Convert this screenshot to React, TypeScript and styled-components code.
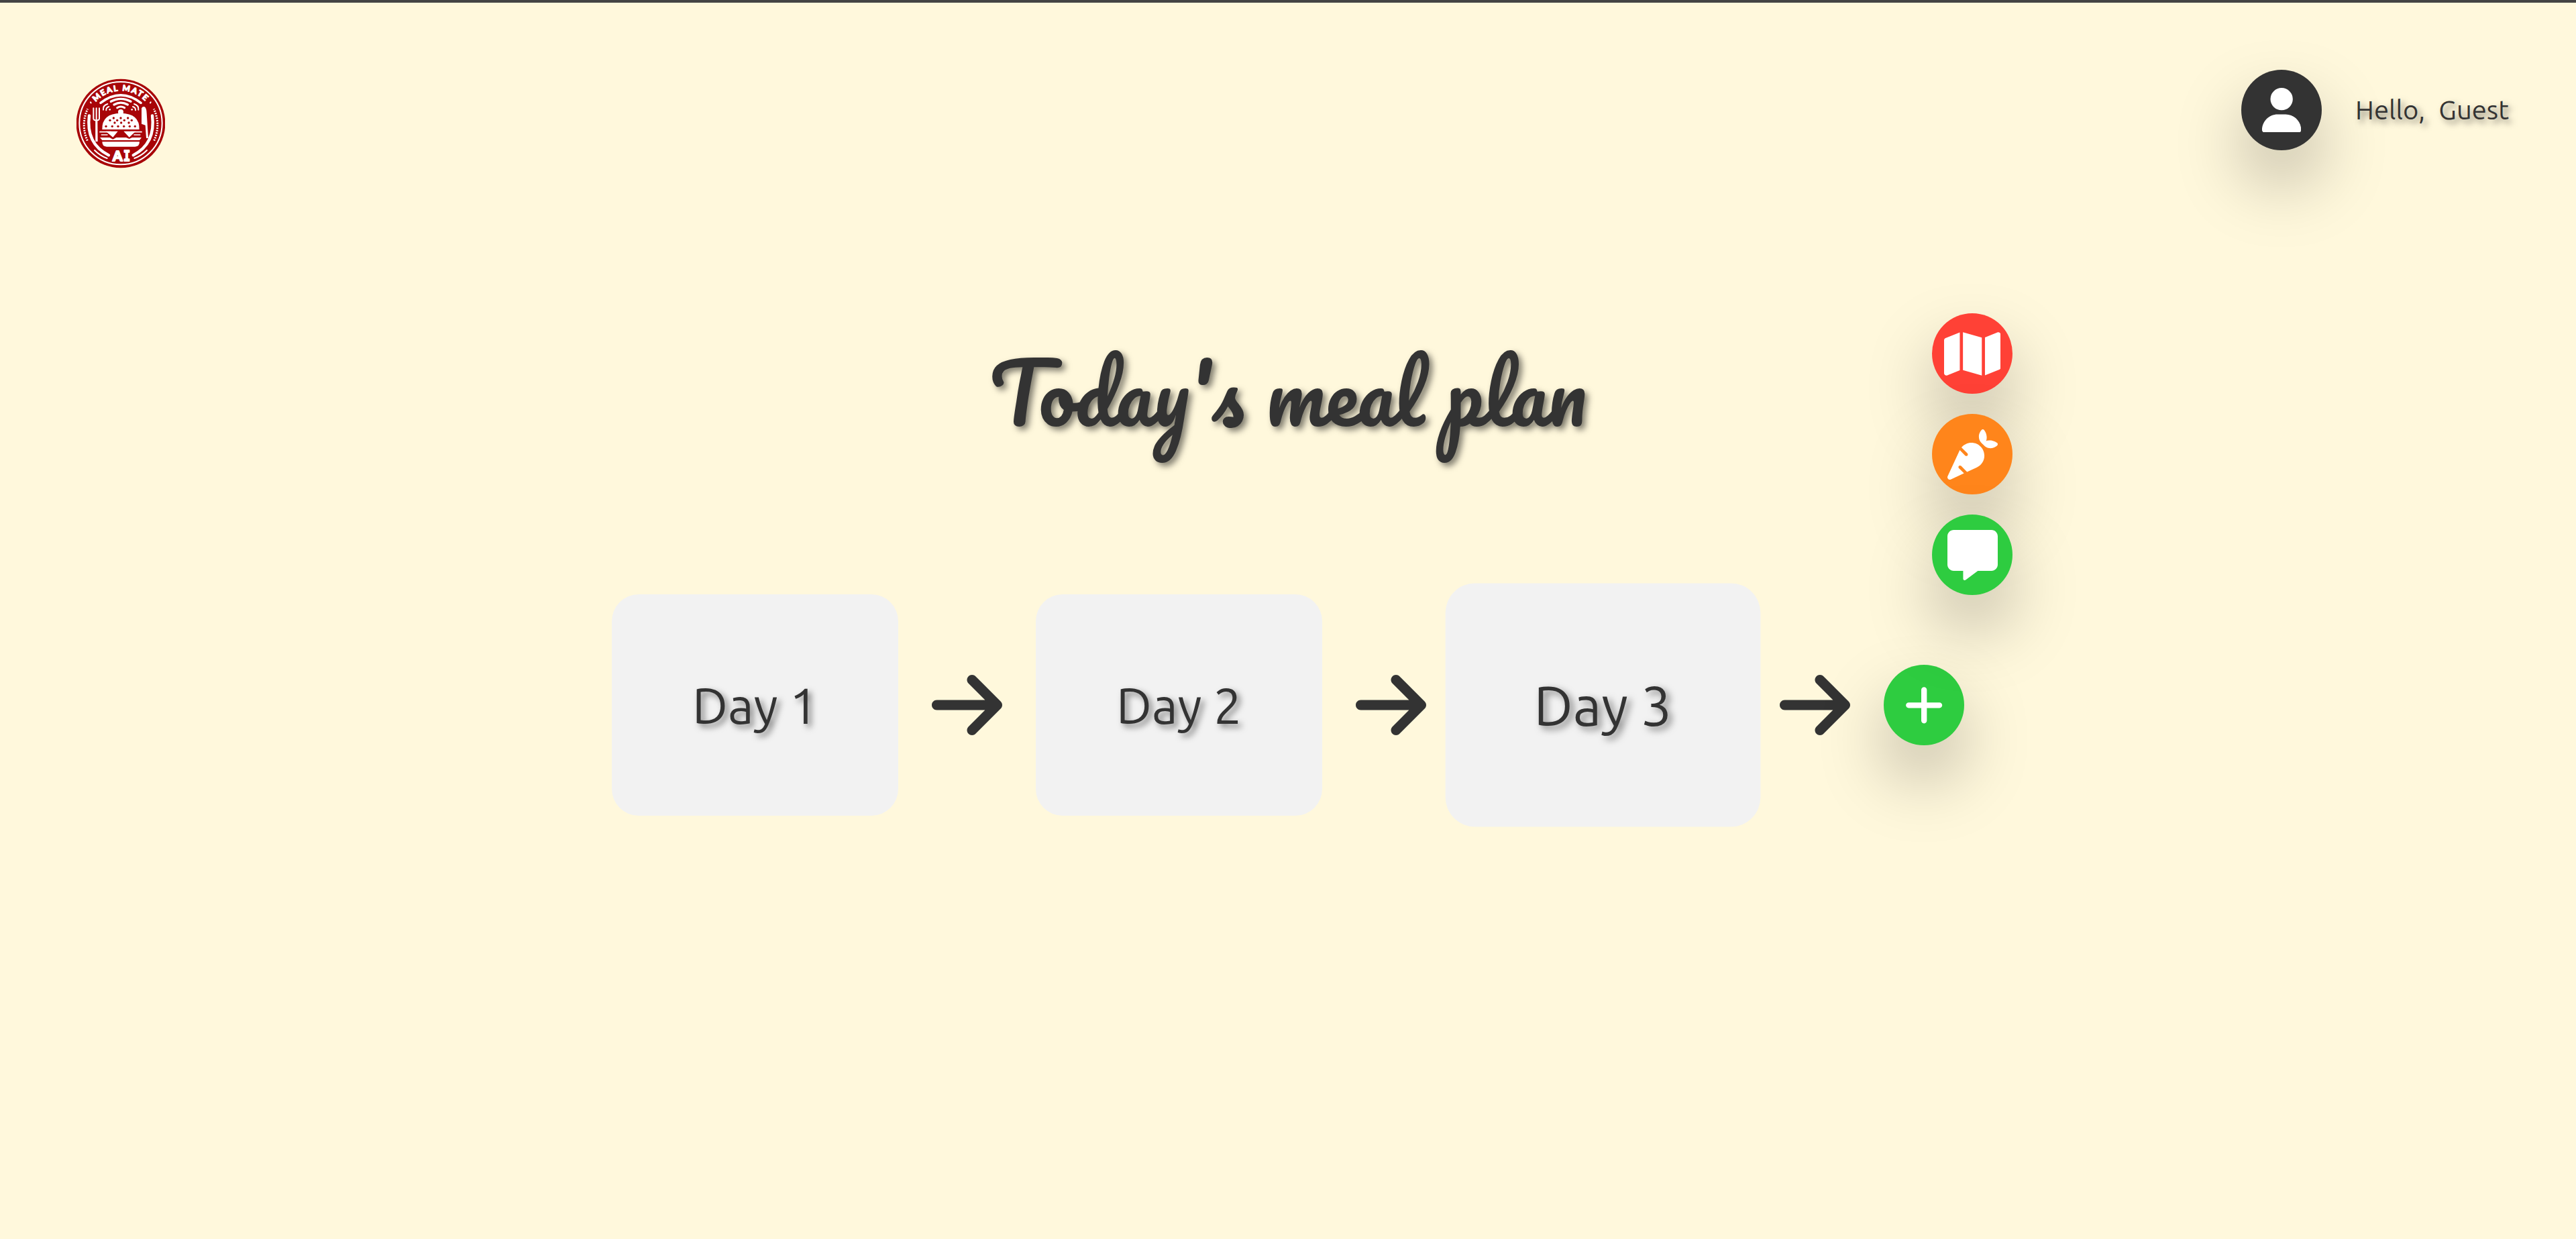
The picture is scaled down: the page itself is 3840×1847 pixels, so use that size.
import React from "react";
import styled, { createGlobalStyle } from "styled-components";
import { FaArrowRight, FaCarrot, FaMap, FaMessage, FaPlus, FaUser } from "react-icons/fa6";

const GlobalStyle = createGlobalStyle`
  * { box-sizing: border-box; }
  body {
    margin: 0;
    background: #fff8dc;
    color: #333;
    font-family: Ubuntu, "Noto Sans", "Open Sans", sans-serif;
  }
`;

const Page = styled.div`
  height: 1847px;
  overflow: hidden;
  border-top: 4px solid #444;
`;

const Header = styled.header`
  display: flex;
  justify-content: space-between;
  align-items: flex-start;
  padding: 100px 100px 0 114px;
  height: 460px;
`;

const Logo = styled.svg`
  display: block;
  width: 132px;
  height: 134px;
  margin-top: 13px;
`;

const Account = styled.div`
  display: flex;
  align-items: center;
  width: 399px;
`;

const Greeting = styled.span`
  margin-left: 50px;
  font-size: 40px;
  line-height: 60px;
  word-spacing: 1px;
  white-space: pre;
  text-shadow: 5px 5px 10px rgba(0, 0, 0, 0.5);
`;

const RoundButton = styled.button<{ $color: string; $icon: number }>`
  display: flex;
  flex: none;
  align-items: center;
  justify-content: center;
  width: 120px;
  height: 120px;
  padding: 0;
  border: 0;
  border-radius: 50%;
  background: ${(p) => p.$color};
  color: #fff;
  font-size: ${(p) => p.$icon}px;
  box-shadow: 0 50px 100px rgba(0, 0, 0, 0.25);
`;

const MapIcon = styled(FaMap)`
  width: 84.4px;
  height: 75px;
`;

const NarrowIcon = styled.span`
  display: flex;
  svg { width: 0.875em; height: 1em; }
`;

const Title = styled.h1`
  margin: 0;
  height: 422px;
  padding-top: 40px;
  font-family: Pacifico, Lato, cursive;
  font-size: 120px;
  font-weight: 400;
  line-height: 160px;
  text-align: center;
  text-shadow: 5px 5px 10px rgba(0, 0, 0, 0.5);
`;

const Plan = styled.main`
  display: flex;
  align-items: center;
  justify-content: center;
  gap: 50px;
  height: 330px;
`;

const DayCard = styled.section<{ $active?: boolean }>`
  display: flex;
  align-items: center;
  justify-content: center;
  width: 427px;
  height: 330px;
  border-radius: 40px;
  background: #f2f2f2;
  font-size: 75px;
  text-shadow: 5px 5px 10px rgba(0, 0, 0, 0.5);
  transform: ${(p) => (p.$active ? "scale(1.1)" : "none")};
`;

const Arrow = styled(FaArrowRight)`
  flex: none;
  width: 105px;
  height: 120px;
`;

const AddMeal = styled.div`
  position: relative;
`;

const Actions = styled.div`
  position: absolute;
  left: 72px;
  bottom: calc(100% + 104px);
  display: flex;
  flex-direction: column;
  gap: 30px;
`;

const dots = [
  [238, 258], [270, 258], [302, 258], [222, 268], [254, 268], [286, 268], [319, 268],
  [243, 279], [272, 279], [306, 279], [204, 295], [232, 295], [258, 295], [284, 295], [310, 295], [334, 295],
];

function MealMateLogo() {
  return (
    <Logo viewBox="72 81 396 402" preserveAspectRatio="none">
      <circle cx="270" cy="282" r="199" fill="#a80508" />
      <g fill="none" stroke="#fff" strokeLinecap="round">
        <circle cx="270" cy="281" r="185" strokeWidth="6" />
        <path d="M121 359A168 168 0 0 1 122 217M419 359A168 168 0 0 0 418 217" strokeWidth="9" strokeDasharray="6 5" strokeLinecap="butt" />
        <path d="M135 187l2 3M404 187l-2 3" strokeWidth="6" />
        <path d="M129 247C119 326 145 389 216 424M411 247C421 326 395 389 326 424" strokeWidth="13" />
        <path d="M153 402Q178 427 209 438M387 402Q362 427 331 438" strokeWidth="6" />
        <path d="M180 190Q270 121 360 190" strokeWidth="11" />
        <path d="M226 184Q270 160 315 184" strokeWidth="10" />
        <path d="M240 198Q270 181 301 198" strokeWidth="10" />
        <path d="M254 212Q270 202 287 212" strokeWidth="9" />
        <path d="M192 221Q190 201 211 195M205 223Q204 211 217 207M349 221Q351 201 330 195M336 223Q337 211 324 207" strokeWidth="6" />
        <path d="M148 214V260Q148 268 161 268Q174 268 174 260V214M161 214V355" strokeWidth="6" />
        <path d="M177 320H226M314 320H363M184 333H210M330 333H356" strokeWidth="5" />
      </g>
      <g fill="#fff">
        <circle cx="221" cy="220" r="4" />
        <circle cx="320" cy="220" r="4" />
        <circle cx="270" cy="231" r="12" />
        <path d="M157 267h9l1 96h-10zM363 214q5-10 14-6 8 5 9 28l7 112h-9l-4-58-17-6z" />
        <path d="M187 309Q185 237 270 236Q355 237 353 309z" />
        <path d="M203 317H257L235 344zM283 317H337L308 344z" />
        <path d="M177 345H220L235 353L250 345H294L308 351L321 345H363L354 357H187z" />
        <path d="M187 364H354Q354 386 334 386H207Q187 386 187 364z" />
      </g>
      <g fill="#a80508">
        {dots.map(([x, y]) => (
          <circle key={`${x}-${y}`} cx={x} cy={y} r="5" />
        ))}
      </g>
      <defs>
        <path id="name-arc" d="M158 187A151 151 0 0 1 384 187" />
      </defs>
      <g fill="#fff" stroke="#fff" strokeLinejoin="round" fontFamily="Lato, sans-serif" fontWeight="900">
        <text fontSize="36" strokeWidth="3">
          <textPath href="#name-arc" textLength="248">MEAL MATE</textPath>
        </text>
        <text x="234" y="450" fontSize="62" strokeWidth="6">A</text>
        <text x="282" y="450" fontSize="62" strokeWidth="6" fontFamily="'DejaVu Sans Mono', monospace" fontWeight="700" textLength="30" lengthAdjust="spacingAndGlyphs">I</text>
      </g>
    </Logo>
  );
}

export default function App() {
  return (
    <>
      <GlobalStyle />
      <Page>
        <Header>
          <MealMateLogo />
          <Account>
            <RoundButton $color="#333" $icon={66.67} aria-label="Account">
              <NarrowIcon><FaUser /></NarrowIcon>
            </RoundButton>
            <Greeting>{"Hello,  Guest"}</Greeting>
          </Account>
        </Header>
        <Title>Today's meal plan</Title>
        <Plan>
          <DayCard>Day 1</DayCard>
          <Arrow />
          <DayCard>Day 2</DayCard>
          <Arrow />
          <DayCard $active>Day 3</DayCard>
          <Arrow />
          <AddMeal>
            <RoundButton $color="#2ecc40" $icon={66.67} aria-label="Add">
              <NarrowIcon><FaPlus /></NarrowIcon>
            </RoundButton>
            <Actions>
              <RoundButton $color="#ff4136" $icon={75} aria-label="Map"><MapIcon /></RoundButton>
              <RoundButton $color="#ff851b" $icon={75} aria-label="Ingredients"><FaCarrot /></RoundButton>
              <RoundButton $color="#2ecc40" $icon={75} aria-label="Chat"><FaMessage /></RoundButton>
            </Actions>
          </AddMeal>
        </Plan>
      </Page>
    </>
  );
}
